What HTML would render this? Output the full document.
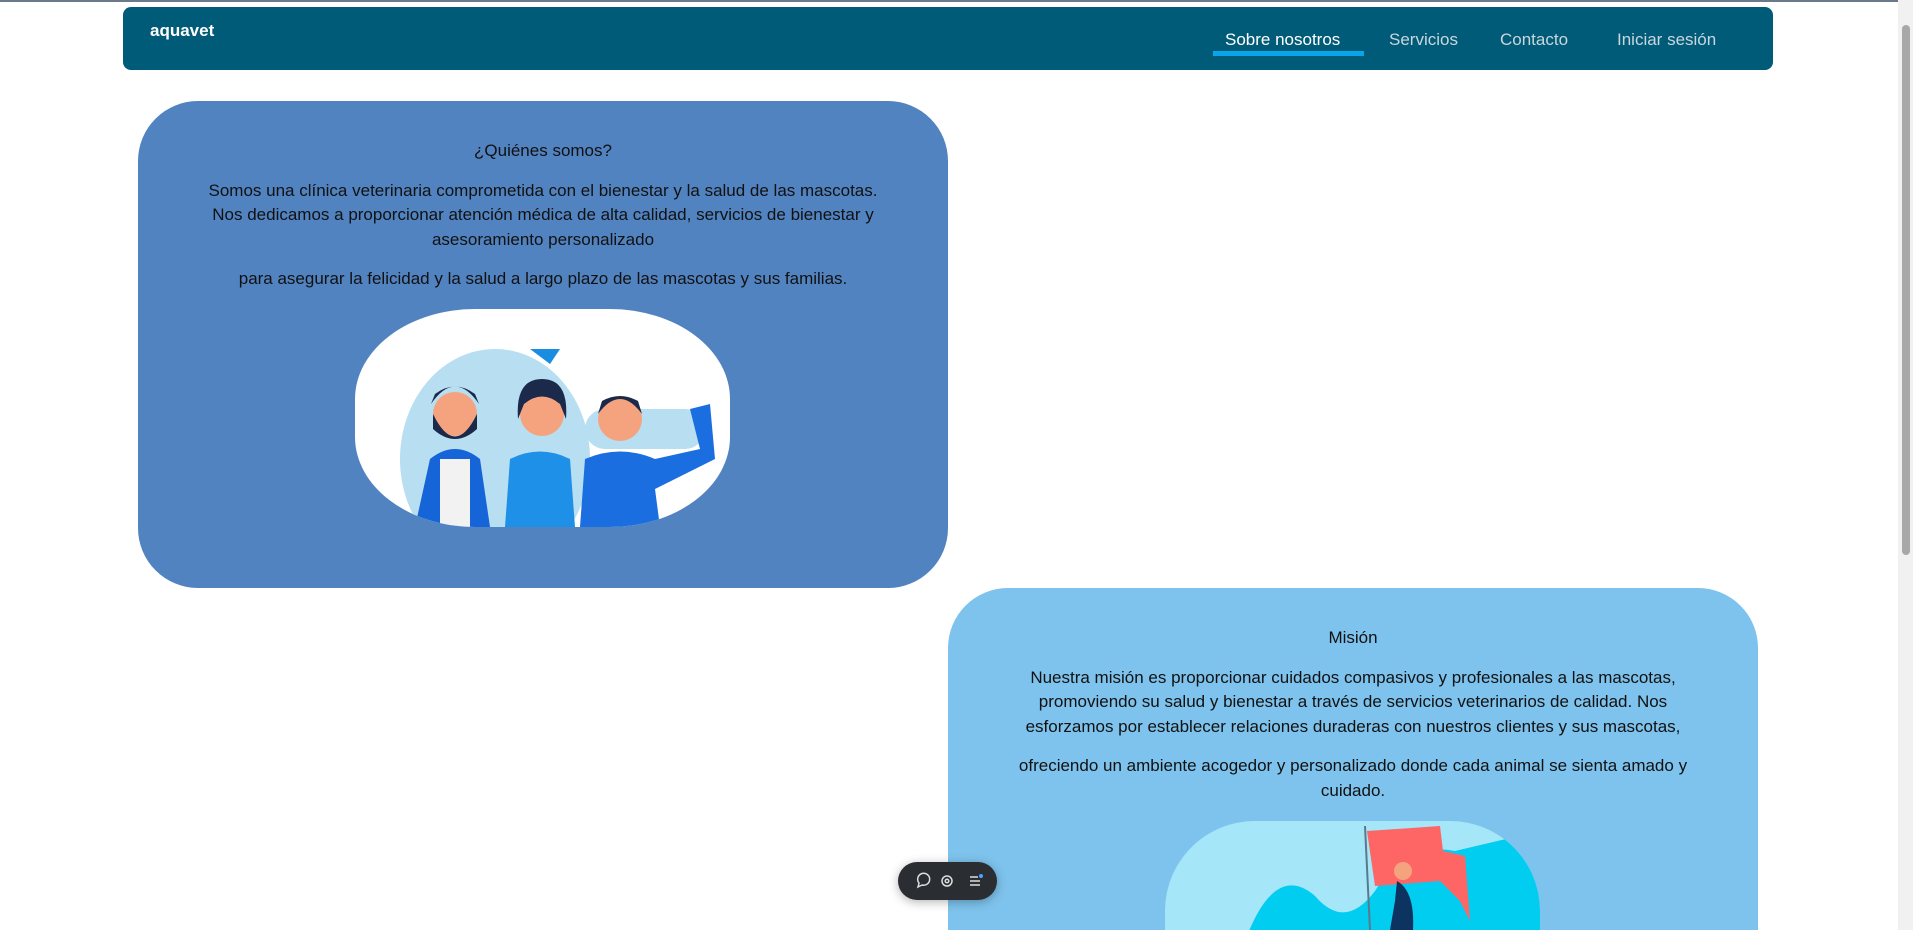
<!DOCTYPE html>
<html style="height:930px;overflow:hidden"><head><meta charset="utf-8"><style>
*{margin:0;padding:0;box-sizing:border-box}
body{width:1913px;height:930px;overflow:hidden;background:#fff;font-family:"Liberation Sans",sans-serif;position:relative}
.topline{position:absolute;left:0;top:0;width:1898px;height:2px;background:#6b7a8a}
.nav{position:absolute;left:123px;top:7px;width:1650px;height:63px;background:#005b78;border-radius:8px}
.logo{position:absolute;left:27px;top:14px;color:#fff;font-weight:bold;font-size:17px}
.nav a{position:absolute;top:23px;font-size:17px;color:#c9d6dc;text-decoration:none}
.ul{position:absolute;left:1090px;top:44px;width:151px;height:5px;background:#0aa5e8}
.card{position:absolute;width:810px;text-align:center;color:#111;font-size:17px;line-height:24.5px;overflow:hidden}
.c1{left:138px;top:101px;height:487px;background:#5283c1;border-radius:60px}
.c2{left:948px;top:588px;height:342px;background:#7ec3ed;border-radius:60px 60px 0 0}
.card h3{font-weight:normal;font-size:17px;margin-top:38px;margin-bottom:15px}
.card p{width:790px;margin:0 auto 15px;white-space:nowrap}
.img{position:absolute;left:217px;width:375px;border-radius:120px/90px;overflow:hidden}
.sb{position:absolute;left:1898px;top:0;width:15px;height:930px;background:#f1f1f1}
.th{position:absolute;left:1902px;top:25px;width:8px;height:530px;background:#a8a8a8;border-radius:4px}
.tb{position:absolute;left:898px;top:862px;width:99px;height:38px;background:#2a2d31;border-radius:19px;box-shadow:0 2px 10px rgba(0,0,0,.3)}
</style></head><body>
<div class="topline"></div>
<div class="nav"><div class="logo">aquavet</div>
<a style="left:1102px;color:#fff">Sobre nosotros</a><a style="left:1266px">Servicios</a><a style="left:1377px">Contacto</a><a style="left:1494px">Iniciar sesión</a>
<div class="ul"></div></div>
<div class="card c1"><h3>¿Quiénes somos?</h3>
<p>Somos una clínica veterinaria comprometida con el bienestar y la salud de las mascotas.<br>Nos dedicamos a proporcionar atención médica de alta calidad, servicios de bienestar y<br>asesoramiento personalizado</p>
<p>para asegurar la felicidad y la salud a largo plazo de las mascotas y sus familias.</p>
<div class="img" style="top:208px;height:218px;background:#fff">
<svg width="375" height="218"><ellipse cx="140" cy="150" rx="95" ry="110" fill="#b8def2"/><rect x="230" y="100" width="120" height="40" rx="20" fill="#b8def2"/>
<polygon points="175,40 205,40 195,55" fill="#1a8de0"/>
<path d="M60 218 L75 150 Q100 130 125 150 L135 218Z" fill="#1565d8"/><rect x="85" y="150" width="30" height="68" fill="#f2f2f2"/>
<circle cx="100" cy="105" r="22" fill="#f5a37e"/><path d="M78 105 Q100 150 122 105 L122 120 Q100 140 78 120Z" fill="#1b2a4a"/><path d="M76 95 Q100 60 124 95 L120 85 Q100 70 80 85Z" fill="#1b2a4a"/>
<path d="M150 218 L155 150 Q185 135 215 150 L220 218Z" fill="#1e90e8"/><circle cx="187" cy="105" r="22" fill="#f5a37e"/><path d="M163 110 Q160 70 187 70 Q214 70 211 110 L205 95 Q187 80 169 95Z" fill="#1b2a4a"/>
<path d="M225 218 L230 150 Q265 135 300 150 L345 140 L335 100 L355 95 L360 150 L300 180 L305 218Z" fill="#1a6ee0"/><circle cx="265" cy="110" r="22" fill="#f5a37e"/><path d="M243 105 Q265 75 287 105 L283 92 Q265 82 247 92Z" fill="#1b2a4a"/>
</svg></div></div>
<div class="card c2"><h3>Misión</h3>
<p>Nuestra misión es proporcionar cuidados compasivos y profesionales a las mascotas,<br>promoviendo su salud y bienestar a través de servicios veterinarios de calidad. Nos<br>esforzamos por establecer relaciones duraderas con nuestros clientes y sus mascotas,</p>
<p>ofreciendo un ambiente acogedor y personalizado donde cada animal se sienta amado y<br>cuidado.</p>
<div class="img" style="top:233px;height:109px;border-radius:90px 90px 0 0;background:#a5e6f8">
<svg width="375" height="109"><path d="M80 120 Q110 40 150 75 Q180 110 210 70 Q240 20 290 30 L375 10 L375 109 L80 109Z" fill="#00cdf0"/>
<line x1="200" y1="5" x2="205" y2="109" stroke="#5a7a8a" stroke-width="2"/><path d="M202 10 L275 5 L278 30 L300 35 L305 100 L295 80 L275 60 L210 65Z" fill="#fe6666"/>
<path d="M232 60 Q250 70 248 109 L225 109 L230 80Z" fill="#0d3360"/><circle cx="238" cy="50" r="9" fill="#f5a37e"/></svg></div></div>
<div class="sb"></div><div class="th"></div>
<div class="tb"><svg width="99" height="38" fill="none" stroke="#ddd" stroke-width="1.5"><path d="M20 25 L21 21 A6 6 0 1 1 24 23Z"/><circle cx="49" cy="19" r="5"/><circle cx="49" cy="19" r="1.8"/><path d="M72 15h8M72 19h10M72 23h10"/><circle cx="83" cy="14" r="2" fill="#4aa3ff" stroke="none"/></svg></div>
</body></html>
